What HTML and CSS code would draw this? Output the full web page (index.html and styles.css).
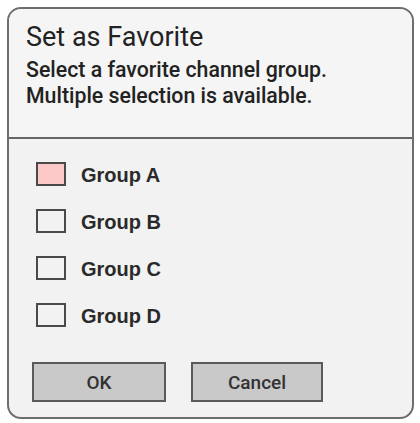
FILE: index.html
```html
<!DOCTYPE html>
<html lang="en">
<head>
    <meta charset="UTF-8">
    <meta name="viewport" content="width=device-width, initial-scale=1.0">
    <link rel="stylesheet" href="styles.css">
    <title>Set as Favorite</title>
</head>
<body>
    <div class="dialog">
        <div class="header">
            <h1>Set as Favorite</h1>
            <p>Select a favorite channel group.<br>Multiple selection is available.</p>
        </div>
        <div class="content">
            <ul class="groups">
                <li class="group focused"><span class="box"></span><span class="label">Group A</span></li>
                <li class="group"><span class="box"></span><span class="label">Group B</span></li>
                <li class="group"><span class="box"></span><span class="label">Group C</span></li>
                <li class="group"><span class="box"></span><span class="label">Group D</span></li>
            </ul>
            <div class="buttons">
                <button class="ok">OK</button>
                <button class="cancel">Cancel</button>
            </div>
        </div>
    </div>
</body>
</html>
```

FILE: styles.css
```css
body{
    margin: 0;
    padding: 7px;
    background: #ffffff;
}

.dialog{
    width: 407px;
    height: 412px;
    box-sizing: border-box;
    border: 2px solid #6e6e6e;
    border-radius: 14px;
    background: #f2f2f2;
    overflow: hidden;
}

.header{
    height: 130px;
    box-sizing: border-box;
    padding: 12px 17px 0;
    background: #f5f5f5;
    border-bottom: 2px solid #666666;
    color: #222222;
    font-family: Roboto, sans-serif;
}

h1{
    margin: 0;
    font-size: 27px;
    line-height: 32px;
    font-weight: normal;
}

.header p{
    margin: 4px 0 0;
    font-size: 21.3px;
    font-weight: 500;
    line-height: 26px;
}

.content{
    padding: 23px 0 0 27px;
}

.groups{
    display: flex;
    flex-direction: column;
    gap: 23px;
    list-style: none;
    margin: 0;
    padding: 0;
}

.group{
    display: flex;
    align-items: center;
    height: 24px;
}

.box{
    width: 30px;
    height: 24px;
    box-sizing: border-box;
    border: 2px solid #4a4a4a;
    background: #f2f2f2;
}

.focused .box{
    background: #fcc8c8;
}

.label{
    margin-left: 15px;
    padding-top: 3px;
    font-family: "Liberation Sans", Arial, sans-serif;
    font-weight: bold;
    font-size: 20px;
    color: #2a2a2a;
}

.buttons{
    display: flex;
    gap: 25px;
    margin: 35px 0 0 -4px;
}

button{
    height: 40px;
    border: 2px solid #5a5a5a;
    background: #c9c9c9;
    font-family: Roboto, sans-serif;
    font-size: 19px;
    font-weight: 500;
    color: #333333;
    padding: 0;
}

.ok{
    width: 134px;
}

.cancel{
    width: 132px;
}
```
